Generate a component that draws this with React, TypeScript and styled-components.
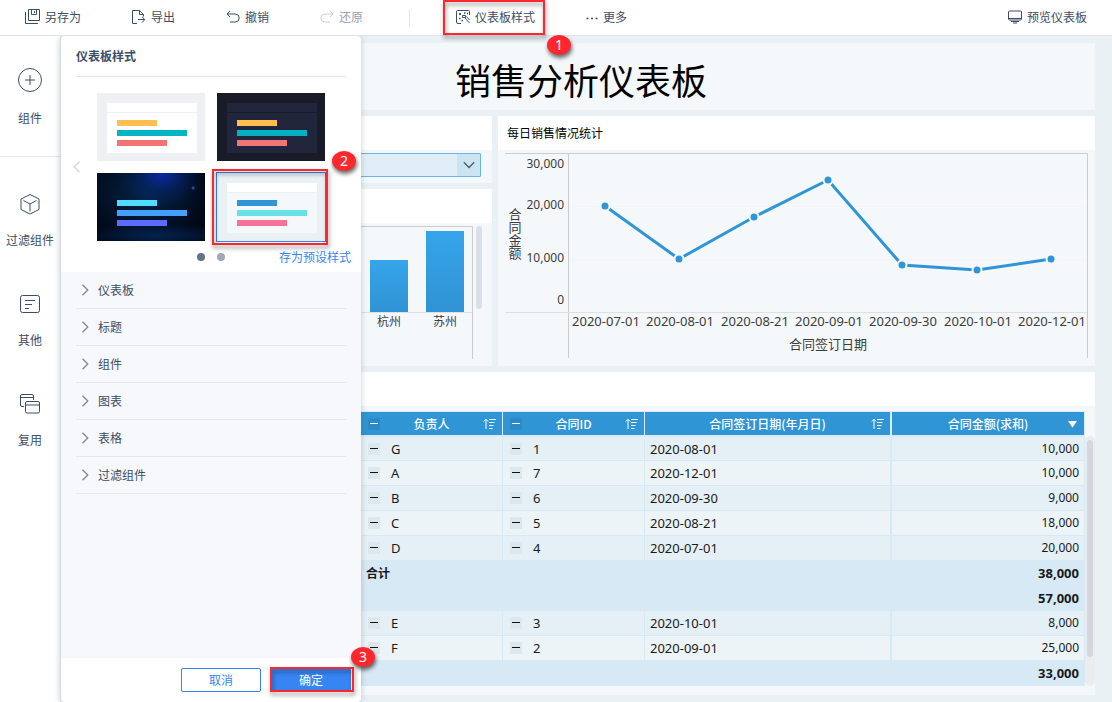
import React from 'react';
import styled, { createGlobalStyle, css } from 'styled-components';

const ink = '#3d4d66';
const blue = '#3685f2';
const accent = '#3095d4';

const GlobalStyle = createGlobalStyle`
  * { box-sizing: border-box; }
  body {
    margin: 0;
    background: #e9f1f4;
    color: ${ink};
    font: 12px/16px "Noto Sans CJK SC", sans-serif;
  }
  button, select {
    margin: 0;
    padding: 0;
    border: 0;
    background: none;
    color: inherit;
    font: inherit;
    cursor: pointer;
  }
  svg { display: block; flex: none; }
`;

const Page = styled.div`
  display: flex;
  flex-direction: column;
  min-height: 100vh;
`;

/* ---------- call-outs ---------- */

const Marked = styled.div`
  position: relative;
  display: flex;
`;

const Frame = styled.span<{ $inset: string }>`
  position: absolute;
  inset: ${(p) => p.$inset};
  z-index: 2;
  border: 2px solid #fd272e;
  filter: drop-shadow(1px 3px 2px rgba(0, 0, 0, 0.45));
  pointer-events: none;
`;

const Step = styled.span<{ $left: number; $top: number }>`
  position: absolute;
  left: ${(p) => p.$left}px;
  top: ${(p) => p.$top}px;
  z-index: 3;
  width: 24px;
  height: 20px;
  border-radius: 50%;
  background: #fd272e;
  box-shadow: 1px 3px 4px rgba(0, 0, 0, 0.6);
  color: #fff;
  font: 14px/20px "Noto Sans", sans-serif;
  text-align: center;
`;

/* ---------- toolbar ---------- */

const Toolbar = styled.header`
  position: relative;
  z-index: 3;
  display: flex;
  align-items: stretch;
  gap: 51px;
  height: 36px;
  padding: 0 25px;
  border-bottom: 1px solid #e0e4e9;
  background: #fff;
`;

const Tool = styled.button<{ $end?: boolean }>`
  display: flex;
  align-items: center;
  gap: 5px;
  padding-bottom: 2px;
  white-space: nowrap;
  &:disabled { color: #9aa3b0; cursor: default; }
  &:disabled svg { color: #ccd0d6; }
  ${(p) => p.$end && css`margin-left: auto;`}
`;

const Divider = styled.span`
  align-self: center;
  width: 1px;
  height: 16px;
  margin: 0 -5px;
  background: #e2e5ea;
`;

/* ---------- side navigation ---------- */

const Body = styled.div`
  display: flex;
  flex: 1;
`;

const Side = styled.nav`
  flex: none;
  width: 60px;
  background: #fff;
`;

const SideTop = styled.div`
  display: flex;
  justify-content: center;
  padding: 30px 0;
  border-bottom: 1px solid #e4e7ec;
`;

const SideList = styled.div`
  display: flex;
  flex-direction: column;
  align-items: center;
  gap: 44px;
  padding-top: 35px;
`;

const SideItem = styled.button`
  display: flex;
  flex-direction: column;
  align-items: center;
  gap: 16px;
`;

/* ---------- style panel ---------- */

const Workspace = styled.div`
  position: relative;
  flex: 1;
  min-width: 0;
`;

const Panel = styled.aside`
  position: absolute;
  left: 0;
  top: 0;
  bottom: 0;
  z-index: 2;
  display: flex;
  flex-direction: column;
  width: 301px;
  border-left: 1px solid #d5dbe0;
  border-radius: 4px;
  background: #fff;
  box-shadow: 0 0 6px rgba(40, 60, 80, 0.25);
`;

const PanelTitle = styled.h2`
  margin: 0 15px;
  border-bottom: 1px solid #e4e6ec;
  font-size: 12px;
  font-weight: 700;
  line-height: 40px;
`;

const Carousel = styled.div`
  display: flex;
  align-items: center;
  gap: 16px;
  padding: 16px 12px 0;
`;

const Thumbs = styled.div`
  display: grid;
  grid-template-columns: 108px 108px;
  gap: 12px;
`;

const Thumb = styled.button<{ $bg: string; $on?: boolean }>`
  display: block;
  width: 108px;
  height: 68px;
  padding: 10px 8px 8px 10px;
  background: ${(p) => p.$bg};
  ${(p) => p.$on && css`box-shadow: 0 0 0 1px ${blue};`}
`;

const Mini = styled.span<{ $bg: string }>`
  display: block;
  height: 50px;
  background: ${(p) => p.$bg};
`;

const MiniHead = styled.span<{ $bg: string; $line: string }>`
  display: block;
  height: 10px;
  border-bottom: 1px solid ${(p) => p.$line};
  background: ${(p) => p.$bg};
`;

const MiniBars = styled.span`
  display: flex;
  flex-direction: column;
  gap: 4px;
  padding: 7px 10px;
`;

const MiniBar = styled.span<{ $w: number; $c: string }>`
  width: ${(p) => p.$w}px;
  height: 6px;
  background: ${(p) => p.$c};
`;

const Pager = styled.div`
  display: flex;
  align-items: center;
  gap: 12px;
  height: 31px;
  padding: 0 10px 0 136px;
`;

const Dot = styled.button<{ $on?: boolean }>`
  width: 8px;
  height: 8px;
  border-radius: 50%;
  background: ${(p) => (p.$on ? '#64738a' : '#a0a8b4')};
`;

const SaveLink = styled.a`
  margin-left: auto;
  color: ${blue};
  text-decoration: none;
`;

const Sections = styled.div`
  flex: 1;
  padding: 0 15px;
  background: #f6f8fb;
`;

const Section = styled.button`
  display: flex;
  align-items: center;
  gap: 9px;
  width: 100%;
  height: 37px;
  padding: 0 0 1px 5px;
  border-bottom: 1px solid #e5e8ec;
  text-align: left;
`;

const Footer = styled.div`
  display: flex;
  justify-content: flex-end;
  gap: 10px;
  padding: 10px;
`;

const Action = styled.button<{ $primary?: boolean }>`
  width: 80px;
  height: 24px;
  border: 1px solid ${blue};
  border-radius: 2px;
  background: ${(p) => (p.$primary ? blue : '#fff')};
  color: ${(p) => (p.$primary ? '#fff' : blue)};
`;

/* ---------- dashboard ---------- */

const Canvas = styled.main`
  display: flex;
  flex-direction: column;
  gap: 6px;
  padding: 7px 17px 7px 7px;
  color: #1a1a1a;
`;

const Banner = styled.h1`
  margin: 0;
  padding: 18px 0 13px;
  background: #f4f8fb;
  color: #000;
  font-size: 36px;
  font-weight: 400;
  line-height: 36px;
  text-align: center;
`;

const Row = styled.div`
  display: grid;
  grid-template-columns: 425fr 597fr;
  gap: 6px;
`;

const Stack = styled.div`
  display: flex;
  flex-direction: column;
  gap: 6px;
  min-width: 0;
`;

const Card = styled.section`
  min-width: 0;
  background: #f4f8fb;
`;

const CardHead = styled.h3`
  height: 34px;
  margin: 0;
  padding: 0 9px;
  background: #fff;
  color: #000;
  font-size: 12px;
  font-weight: 400;
  line-height: 34px;
`;

const FilterBody = styled.div`
  padding: 3px 11px 6px;
`;

const SelectBox = styled.div`
  display: flex;
  height: 24px;
  border: 1px solid #6cb4e4;
  border-radius: 1px;
  background: #e0eef7;
`;

const Select = styled.select`
  flex: 1;
  appearance: none;
`;

const SelectArrow = styled.span`
  display: grid;
  place-items: center;
  width: 23px;
  background: #cce4f2;
`;

const ChartBody = styled.div<{ $bottom: number }>`
  display: flex;
  align-items: flex-start;
  gap: 3px;
  padding: 3px 7px ${(p) => p.$bottom}px;
`;

const Chart = styled.svg`
  flex: 1;
  min-width: 0;
  fill: #3c3c3c;
  font-size: 13px;
`;

const Scroll = styled.div`
  width: 6px;
  height: 83px;
  margin-right: 3px;
  border-radius: 3px;
  background: #dbe0e8;
`;

const TableBody = styled.div`
  display: flex;
  padding: 5px 0 9px 294px;
`;

const Table = styled.table`
  flex: 1;
  border-collapse: separate;
  border-spacing: 0;
  table-layout: fixed;
`;

const Col = styled.col<{ $w?: number }>`
  ${(p) => p.$w && css`width: ${p.$w}px;`}
`;

const Th = styled.th<{ $gap: number }>`
  height: 25px;
  padding: 0 6px 0 7px;
  border: solid #dcebf5;
  border-width: 1px ${(p) => p.$gap}px 1px 0;
  background: ${accent};
  color: #fff;
  font-weight: 500;
`;

const ThInner = styled.div`
  display: grid;
  grid-template-columns: 12px 1fr 13px;
  align-items: center;
`;

const Tr = styled.tr<{ $bg: string; $total?: boolean; $first?: boolean }>`
  td {
    height: 25px;
    padding: 0 5px;
    border-bottom: 1px solid #d7e9f5;
    ${(p) => p.$first && css`border-top: 1px solid #d7e9f5;`}
    background: ${(p) => p.$bg};
    ${(p) => p.$total && css`font-weight: 700;`}
  }
`;

const Td = styled.td<{ $gap: number }>`
  border-right: ${(p) => p.$gap}px solid #d7e9f5;
  font: 13px/16px "Noto Sans", sans-serif;
`;

const Amount = styled.td<{ $bold?: boolean }>`
  border-right: 1px solid #d7e9f5;
  font: ${(p) => (p.$bold ? 13 : 12)}px/16px "Noto Sans", sans-serif;
  text-align: right;
`;

const TotalLabel = styled.td`
  font-size: 12px;
`;

const Fold = styled.span`
  display: flex;
  align-items: center;
  gap: 11px;
  padding-left: 2px;
`;

const Toggle = styled.button<{ $head?: boolean }>`
  display: grid;
  place-items: center;
  width: 12px;
  height: 12px;
  background: ${(p) => (p.$head ? '#2a8ac8' : '#dde8ee')};
  color: ${(p) => (p.$head ? '#fff' : '#111')};
`;

const Track = styled.div`
  width: 10px;
  margin-top: 25px;
  padding: 4px 2px;
  border-radius: 5px;
  background: #e9edf0;
`;

const Grip = styled.div`
  height: 217px;
  border-radius: 3px;
  background: #d4d8de;
`;

/* ---------- icons ---------- */

type IconProps = { w: number; h?: number; children: React.ReactNode };
const Icon = ({ w, h = w, children }: IconProps) => (
  <svg width={w} height={h} viewBox={`0 0 ${w} ${h}`} fill="none" stroke="currentColor" aria-hidden="true">
    {children}
  </svg>
);

const SaveIcon = () => (
  <Icon w={15}>
    <path d="M3.5 .5h11v11h-11zM6.5 .5v5h5v-5M9.5 2v2M.5 3v11.5H13" />
  </Icon>
);
const ExportIcon = () => (
  <Icon w={14}>
    <path d="M5 13.5H.5V.5h7l4 4v2M7.5 .5v4h4M6 9.5h6.5M10 6.8l2.8 2.7L10 12.5" />
  </Icon>
);
const UndoIcon = () => (
  <Icon w={14}>
    <path d="M4 1L1 4l3 3M1 4h8.2a3.8 3.8 0 0 1 0 8H4" />
  </Icon>
);
const RedoIcon = () => (
  <Icon w={14}>
    <path d="M10 1l3 3-3 3M13 4H4.8a3.8 3.8 0 0 0 0 8H10" />
  </Icon>
);
const StyleIcon = () => (
  <Icon w={14}>
    <path d="M5 13.5H2q-1.500 0-1.500-1.500V1.500q0-1 1-1h11q1 0 1 1V5" />
    <path d="M6.500 5.500h3v2h-3zM8.500 7.500l5 5.500M10.500 6.500l3 3.500" />
    <path d="M3 4h2M4 3v2M8 3h1.500M3 8.500h1.500M5.500 10.500h1.500M11 3.500h1" strokeWidth="1.500" />
  </Icon>
);
const MoreIcon = () => (
  <Icon w={12}>
    <path d="M.5 7.500h2M5 7.500h2M9.500 7.500h2" strokeWidth="1.500" />
  </Icon>
);
const ScreenIcon = () => (
  <Icon w={14}>
    <path d="M1.500 1h11q1 0 1 1v7q0 1-1 1h-11q-1 0-1-1V2q0-1 1-1zM.5 8.500h13" />
    <path d="M3 11.500h8M5 13h4" />
  </Icon>
);
const PlusIcon = () => (
  <Icon w={28}>
    <circle cx="14" cy="14" r="11.500" />
    <path d="M14 9v10M9 14h10" />
  </Icon>
);
const CubeIcon = () => (
  <Icon w={24}>
    <path d="M12 2.500l9 4.500v10.500l-9 4.500-9-4.500V7zM5.500 8.500L12 12l6.500-3.500M12 12v7.500" />
  </Icon>
);
const OtherIcon = () => (
  <Icon w={24}>
    <rect x="2.500" y="3.500" width="19" height="17" rx="2" />
    <path d="M7 8.500h10M7 12.500h7M7 16.500h4" />
  </Icon>
);
const ReuseIcon = () => (
  <Icon w={24}>
    <path d="M6 14.500H4q-1.500 0-1.500-1.500V4q0-1.500 1.500-1.500h10q1.500 0 1.500 1.500v4M2.500 5.500h13" />
    <rect x="7.500" y="9.500" width="14" height="11.500" rx="1.500" />
    <path d="M7.500 13h14" />
  </Icon>
);
const ChevronRight = () => (
  <Icon w={8} h={12}>
    <path d="M1.500 .8L6.800 6l-5.300 5.200" stroke="#7c889c" strokeWidth="1.300" />
  </Icon>
);
const ChevronLeft = () => (
  <Icon w={8} h={12}>
    <path d="M6.500 .8L1.200 6l5.300 5.200" stroke="#cfd4dc" strokeWidth="1.300" />
  </Icon>
);
const ChevronDown = () => (
  <Icon w={12} h={8}>
    <path d="M.8 1.200L6 6.500l5.200-5.300" stroke="#4a5a6c" strokeWidth="1.300" />
  </Icon>
);
const Minus = () => (
  <Icon w={10} h={2}>
    <path d="M1 .5h8" />
  </Icon>
);
const SortIcon = () => (
  <Icon w={13} h={12}>
    <path d="M3 11V2M.8 3.500L3 1.200l2.200 2.300M6 1.500h7M6 4.500h5.500M6 7.500h4.500M6 10.500h3.500" />
  </Icon>
);
const CaretIcon = () => (
  <Icon w={13} h={8}>
    <path d="M3 1h9L7.500 7.500z" fill="currentColor" stroke="none" />
  </Icon>
);

/* ---------- data ---------- */

const themes = [
  { name: '1', bg: '#eff0f4', card: '#fff', head: '#fff', line: '#eff0f4', bars: ['#ffbf50', '#04b5c4', '#f27474'] },
  { name: '2', bg: '#1a1b29', card: '#22263c', head: '#22263c', line: '#1a1b29', bars: ['#ffbf50', '#04b0c2', '#f27474'] },
  {
    name: '3',
    bg: 'radial-gradient(ellipse 42px 34px at 60% 0, #0a2aa6, rgba(6, 36, 110, 0.5) 55%, transparent), radial-gradient(circle at 89% 22%, #11628e 0 1px, transparent 2px), radial-gradient(ellipse 80px 12px at 55% 92%, #04224e, transparent), radial-gradient(ellipse at 45% 30%, #03254a, #020716 75%)',
    card: 'transparent', head: 'transparent', line: 'transparent', bars: ['#50dcff', '#42a0fa', '#5a6cff'],
  },
  { name: '4', bg: '#e9f1f5', card: '#f4f8fb', head: '#fff', line: '#e9f1f5', bars: ['#3095d4', '#68e0e8', '#f5739a'] },
];

const sections = ['仪表板', '标题', '组件', '图表', '表格', '过滤组件'];

const points = [
  { date: '2020-07-01', x: 100, y: 53 },
  { date: '2020-08-01', x: 174, y: 106 },
  { date: '2020-08-21', x: 249, y: 64 },
  { date: '2020-09-01', x: 323, y: 27 },
  { date: '2020-09-30', x: 397, y: 112 },
  { date: '2020-10-01', x: 472, y: 117 },
  { date: '2020-12-01', x: 546, y: 106 },
];
const ticks = [
  { label: '30,000', y: 15 },
  { label: '20,000', y: 56 },
  { label: '10,000', y: 109 },
  { label: '0', y: 151 },
];

const bars = [
  { city: '杭州', x: 296, top: 34 },
  { city: '苏州', x: 352, top: 5 },
];

const odd = '#e5f0f6';
const even = '#ecf4f7';
const sum = '#d7e9f5';
type Line = { owner?: string; id?: string; date?: string; amount: string; bg: string; label?: string };
const lines: Line[] = [
  { owner: 'G', id: '1', date: '2020-08-01', amount: '10,000', bg: odd },
  { owner: 'A', id: '7', date: '2020-12-01', amount: '10,000', bg: even },
  { owner: 'B', id: '6', date: '2020-09-30', amount: '9,000', bg: odd },
  { owner: 'C', id: '5', date: '2020-08-21', amount: '18,000', bg: even },
  { owner: 'D', id: '4', date: '2020-07-01', amount: '20,000', bg: odd },
  { label: '合计', amount: '38,000', bg: sum },
  { amount: '57,000', bg: sum },
  { owner: 'E', id: '3', date: '2020-10-01', amount: '8,000', bg: odd },
  { owner: 'F', id: '2', date: '2020-09-01', amount: '25,000', bg: even },
  { amount: '33,000', bg: sum },
];

/* ---------- parts ---------- */

const ThemeThumb = ({ t, on }: { t: (typeof themes)[number]; on?: boolean }) => (
  <Thumb $bg={t.bg} $on={on} aria-label={t.name} aria-pressed={!!on}>
    <Mini $bg={t.card}>
      <MiniHead $bg={t.head} $line={t.line} />
      <MiniBars>
        {[40, 70, 50].map((w, i) => <MiniBar key={w} $w={w} $c={t.bars[i]} />)}
      </MiniBars>
    </Mini>
  </Thumb>
);

const StylePanel = () => (
  <Panel>
    <PanelTitle>仪表板样式</PanelTitle>
    <Carousel>
      <button aria-label="‹"><ChevronLeft /></button>
      <Thumbs>
        {themes.slice(0, 3).map((t) => <ThemeThumb key={t.name} t={t} />)}
        <Marked>
          <ThemeThumb t={themes[3]} on />
          <Frame $inset="-4px -3px -4px -5px" />
          <Step $left={115} $top={-22}>2</Step>
        </Marked>
      </Thumbs>
    </Carousel>
    <Pager>
      <Dot $on aria-label="1" />
      <Dot aria-label="2" />
      <SaveLink href="#">存为预设样式</SaveLink>
    </Pager>
    <Sections>
      {sections.map((s) => (
        <Section key={s} aria-expanded="false"><ChevronRight />{s}</Section>
      ))}
    </Sections>
    <Footer>
      <Action>取消</Action>
      <Marked>
        <Action $primary>确定</Action>
        <Frame $inset="-1px -3px 0 -1px" />
        <Step $left={80} $top={-21}>3</Step>
      </Marked>
    </Footer>
  </Panel>
);

const BarChart = () => (
  <Chart viewBox="0 0 399 135">
    <defs>
      <linearGradient id="bar" x1="0" y1="0" x2="0" y2="1">
        <stop offset="0" stopColor="#35a5ea" />
        <stop offset="1" stopColor="#2f93d4" />
      </linearGradient>
    </defs>
    <path d="M0 .5h398.500V133" fill="none" stroke="#cacdd0" />
    <path d="M0 86.500h398" stroke="#dde1e4" />
    {bars.map((b) => (
      <g key={b.city}>
        <rect x={b.x} y={b.top} width="38" height={86 - b.top} fill="url(#bar)" />
        <text x={b.x + 19} y="100" fontSize="12" textAnchor="middle">{b.city}</text>
      </g>
    ))}
  </Chart>
);

const VerticalTitle = styled.text`
  writing-mode: vertical-rl;
`;

const Latin = styled.g`
  font-family: "Noto Sans", sans-serif;
`;

const LineChart = () => (
  <Chart viewBox="0 0 583 206">
    <path d="M63 53.500h519M63 106.500h519" stroke="#f4f4f4" />
    <path d="M0 .5h582.500V205M63.500 .5V205" fill="none" stroke="#cacdd0" />
    <path d="M0 159.500h582" stroke="#dde1e4" />
    <polyline points={points.map((p) => `${p.x},${p.y}`).join(' ')} fill="none" stroke={accent} strokeWidth="3" />
    {points.map((p) => (
      <circle key={p.date} cx={p.x} cy={p.y} r="4.500" fill={accent} stroke="#f4f8fb" strokeWidth="2" />
    ))}
    <Latin>
      {ticks.map((t) => <text key={t.label} x="59" y={t.y} fontSize="12" textAnchor="end">{t.label}</text>)}
      {points.map((p) => <text key={p.date} x={p.x + 1} y="173" textAnchor="middle">{p.date}</text>)}
    </Latin>
    <text x="323" y="196" textAnchor="middle">合同签订日期</text>
    <VerticalTitle x="10" y="55">合同金额</VerticalTitle>
  </Chart>
);

const HeadCell = ({ text, fold, caret, gap = 1 }: { text: string; fold?: boolean; caret?: boolean; gap?: number }) => (
  <Th $gap={gap} scope="col">
    <ThInner>
      {fold ? <Toggle $head aria-label="−"><Minus /></Toggle> : <span />}
      <span>{text}</span>
      <button aria-label="↑">{caret ? <CaretIcon /> : <SortIcon />}</button>
    </ThInner>
  </Th>
);

const DataTable = () => (
  <Table>
    <colgroup>
      <Col $w={142} /><Col $w={142} /><Col $w={247} /><Col />
    </colgroup>
    <thead>
      <tr>
        <HeadCell text="负责人" fold />
        <HeadCell text="合同ID" fold />
        <HeadCell text="合同签订日期(年月日)" gap={2} />
        <HeadCell text="合同金额(求和)" caret />
      </tr>
    </thead>
    <tbody>
      {lines.map((l, i) => (
        <Tr key={i} $bg={l.bg} $total={!l.owner} $first={i === 0}>
          {l.owner ? (
            <>
              <Td $gap={1}><Fold><Toggle aria-label="−"><Minus /></Toggle>{l.owner}</Fold></Td>
              <Td $gap={1}><Fold><Toggle aria-label="−"><Minus /></Toggle>{l.id}</Fold></Td>
              <Td $gap={2}>{l.date}</Td>
            </>
          ) : (
            <TotalLabel colSpan={3}>{l.label}</TotalLabel>
          )}
          <Amount $bold={!l.owner}>{l.amount}</Amount>
        </Tr>
      ))}
    </tbody>
  </Table>
);

export default function App() {
  return (
    <Page>
      <GlobalStyle />
      <Toolbar>
        <Tool><SaveIcon />另存为</Tool>
        <Tool><ExportIcon />导出</Tool>
        <Tool><UndoIcon />撤销</Tool>
        <Tool disabled><RedoIcon />还原</Tool>
        <Divider />
        <Marked>
          <Tool><StyleIcon />仪表板样式</Tool>
          <Frame $inset="0 -10px 0 -13px" />
          <Step $left={91} $top={35}>1</Step>
        </Marked>
        <Tool><MoreIcon />更多</Tool>
        <Tool $end><ScreenIcon />预览仪表板</Tool>
      </Toolbar>
      <Body>
        <Side>
          <SideTop><SideItem><PlusIcon />组件</SideItem></SideTop>
          <SideList>
            <SideItem><CubeIcon />过滤组件</SideItem>
            <SideItem><OtherIcon />其他</SideItem>
            <SideItem><ReuseIcon />复用</SideItem>
          </SideList>
        </Side>
        <Workspace>
          <StylePanel />
          <Canvas>
            <Banner>销售分析仪表板</Banner>
            <Row>
              <Stack>
                <Card>
                  <CardHead />
                  <FilterBody>
                    <SelectBox>
                      <Select aria-label="组件"><option /></Select>
                      <SelectArrow><ChevronDown /></SelectArrow>
                    </SelectBox>
                  </FilterBody>
                </Card>
                <Card>
                  <CardHead />
                  <ChartBody $bottom={5}><BarChart /><Scroll /></ChartBody>
                </Card>
              </Stack>
              <Card>
                <CardHead>每日销售情况统计</CardHead>
                <ChartBody $bottom={7}><LineChart /></ChartBody>
              </Card>
            </Row>
            <Card>
              <CardHead />
              <TableBody>
                <DataTable />
                <Track><Grip /></Track>
              </TableBody>
            </Card>
          </Canvas>
        </Workspace>
      </Body>
    </Page>
  );
}
